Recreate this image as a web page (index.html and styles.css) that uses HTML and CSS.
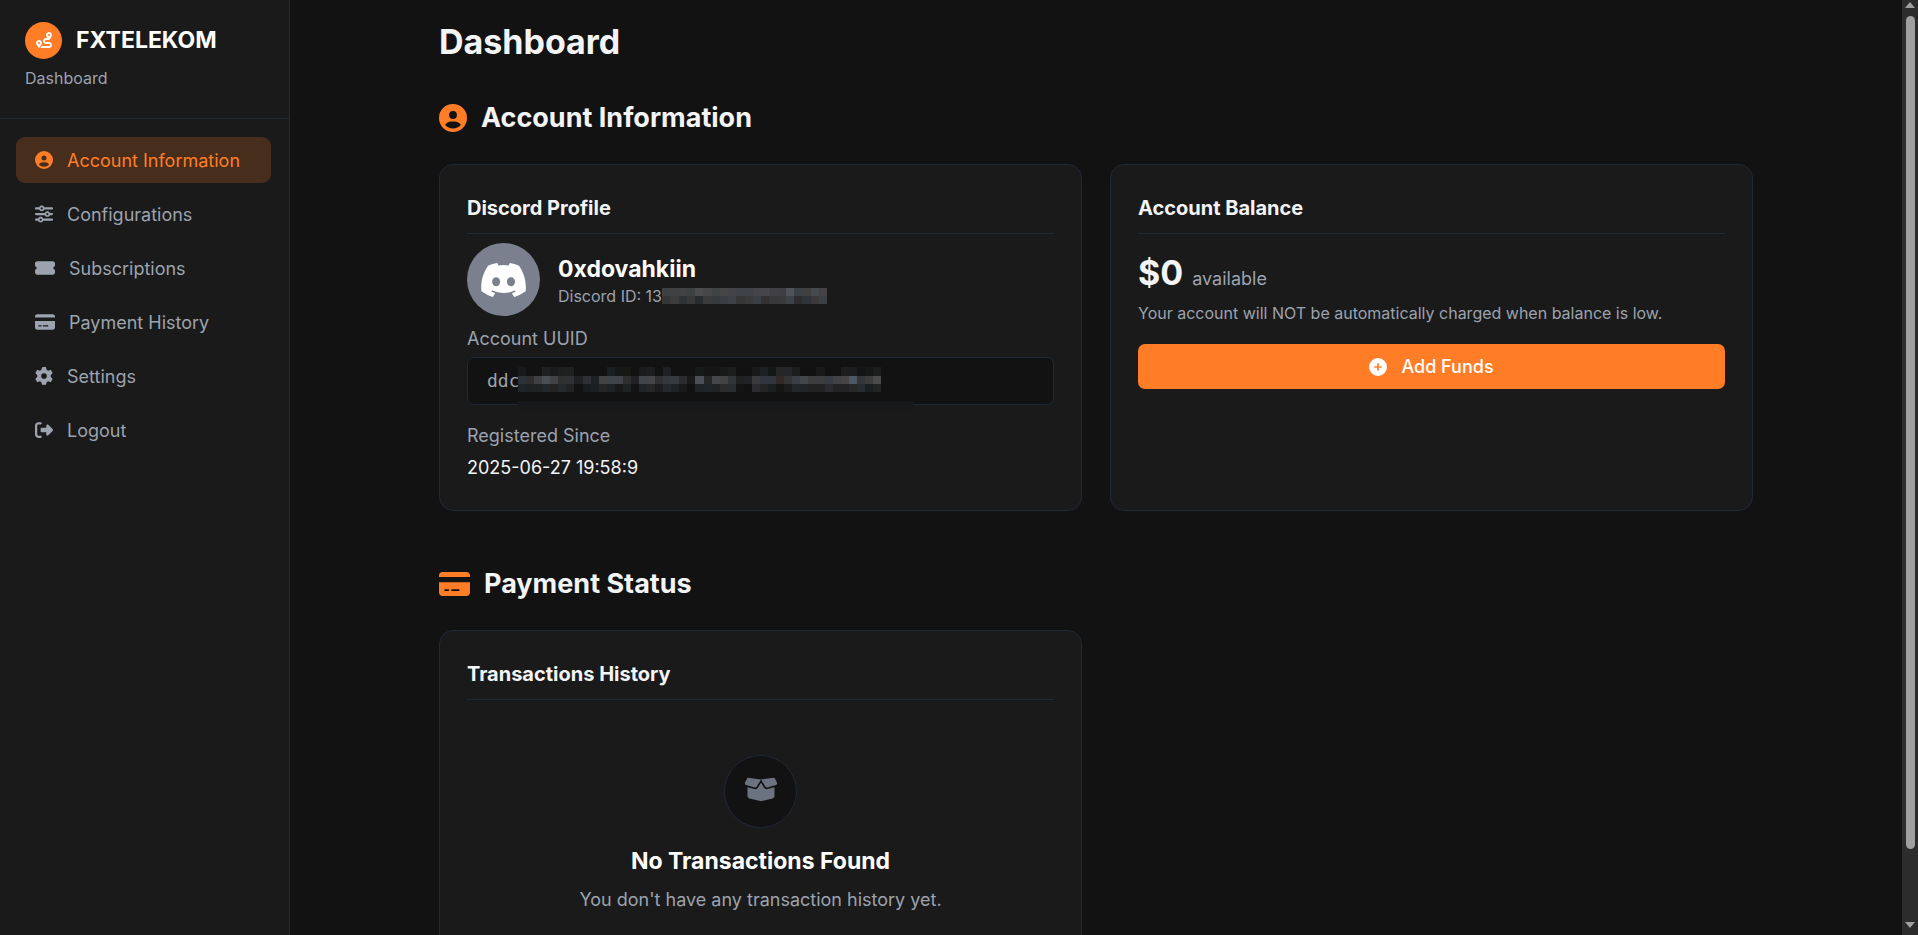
FILE: index.html
```html
<!DOCTYPE html>
<html lang="en">
<head>
<meta charset="utf-8">
<meta name="viewport" content="width=device-width, initial-scale=1">
<title>FXTELEKOM Dashboard</title>
<link rel="stylesheet" href="styles.css">
</head>
<body>
<svg class="sprite" aria-hidden="true">
  <symbol id="i-user" viewBox="0 0 512 512"><path d="M399 384.2C376.9 345.8 335.4 320 288 320H224c-47.4 0-88.9 25.8-111 64.2c35.2 39.2 86.2 63.8 143 63.8s107.8-24.7 143-63.8zM0 256a256 256 0 1 1 512 0A256 256 0 1 1 0 256zm256 16a72 72 0 1 0 0-144 72 72 0 1 0 0 144z"/></symbol>
  <symbol id="i-sliders" viewBox="0 0 512 512"><path d="M0 416c0 17.700 14.300 32 32 32l54.700 0c12.300 28.300 40.500 48 73.300 48s61-19.700 73.300-48L480 448c17.700 0 32-14.300 32-32s-14.300-32-32-32l-246.700 0c-12.300-28.300-40.500-48-73.300-48s-61 19.700-73.300 48L32 384c-17.700 0-32 14.300-32 32zm128 0a32 32 0 1 1 64 0 32 32 0 1 1 -64 0zM320 256a32 32 0 1 1 64 0 32 32 0 1 1 -64 0zm32-80c-32.800 0-61 19.700-73.300 48L32 224c-17.700 0-32 14.300-32 32s14.300 32 32 32l246.700 0c12.300 28.300 40.500 48 73.300 48s61-19.700 73.300-48l54.700 0c17.700 0 32-14.300 32-32s-14.300-32-32-32l-54.700 0c-12.300-28.300-40.500-48-73.300-48zM192 128a32 32 0 1 1 0-64 32 32 0 1 1 0 64zm73.300-64C253 35.700 224.800 16 192 16s-61 19.700-73.300 48L32 64C14.300 64 0 78.300 0 96s14.300 32 32 32l86.700 0c12.300 28.300 40.500 48 73.300 48s61-19.700 73.300-48L480 128c17.700 0 32-14.300 32-32s-14.300-32-32-32L265.300 64z"/></symbol>
  <symbol id="i-ticket" viewBox="0 0 576 512"><path d="M0 128C0 92.700 28.700 64 64 64l448 0c35.300 0 64 28.700 64 64l0 64c0 8.800-7.400 15.700-15.700 18.600C541.500 217.100 528 235 528 256s13.500 38.900 32.300 45.400c8.300 2.900 15.700 9.800 15.700 18.600l0 64c0 35.300-28.700 64-64 64L64 448c-35.300 0-64-28.700-64-64l0-64c0-8.800 7.400-15.700 15.700-18.600C34.500 294.900 48 277 48 256s-13.500-38.900-32.300-45.400C7.400 207.700 0 200.800 0 192l0-64z"/></symbol>
  <symbol id="i-card" viewBox="0 0 576 512"><path d="M64 32C28.700 32 0 60.700 0 96l0 32 576 0 0-32c0-35.300-28.700-64-64-64L64 32zM576 224L0 224 0 416c0 35.300 28.700 64 64 64l448 0c35.300 0 64-28.700 64-64l0-192zM112 352l64 0c8.800 0 16 7.200 16 16s-7.200 16-16 16l-64 0c-8.800 0-16-7.200-16-16s7.200-16 16-16zm112 16c0-8.800 7.200-16 16-16l128 0c8.800 0 16 7.200 16 16s-7.200 16-16 16l-128 0c-8.800 0-16-7.200-16-16z"/></symbol>
  <symbol id="i-gear" viewBox="0 0 512 512"><path d="M495.900 166.600c3.200 8.700 .5 18.400-6.400 24.600l-43.300 39.400c1.100 8.300 1.700 16.800 1.700 25.400s-.6 17.100-1.700 25.400l43.300 39.400c6.900 6.200 9.600 15.900 6.400 24.600c-4.400 11.900-9.700 23.300-15.800 34.300l-4.700 8.100c-6.600 11-14 21.400-22.100 31.200c-5.900 7.200-15.700 9.600-24.500 6.800l-55.700-17.700c-13.400 10.300-28.200 18.900-44 25.400l-12.500 57.100c-2 9.100-9 16.300-18.200 17.800c-13.800 2.300-28 3.500-42.500 3.500s-28.700-1.200-42.500-3.500c-9.200-1.500-16.200-8.700-18.200-17.800l-12.500-57.100c-15.800-6.500-30.600-15.100-44-25.400L83.100 425.900c-8.800 2.800-18.600 .3-24.500-6.800c-8.100-9.800-15.500-20.200-22.100-31.200l-4.700-8.100c-6.100-11-11.400-22.400-15.800-34.300c-3.200-8.700-.5-18.400 6.400-24.600l43.300-39.400C64.600 273.100 64 264.600 64 256s.6-17.100 1.700-25.400L22.400 191.200c-6.900-6.200-9.600-15.900-6.400-24.600c4.400-11.900 9.700-23.300 15.800-34.300l4.700-8.100c6.600-11 14-21.400 22.100-31.200c5.900-7.200 15.700-9.600 24.500-6.800l55.700 17.700c13.400-10.300 28.200-18.900 44-25.400l12.500-57.100c2-9.100 9-16.300 18.200-17.800C227.300 1.200 241.500 0 256 0s28.700 1.200 42.500 3.500c9.200 1.500 16.200 8.700 18.200 17.800l12.500 57.100c15.800 6.500 30.600 15.100 44 25.400l55.700-17.700c8.800-2.800 18.600-.3 24.500 6.800c8.100 9.800 15.500 20.200 22.100 31.200l4.700 8.100c6.100 11 11.400 22.400 15.800 34.300zM256 336a80 80 0 1 0 0-160 80 80 0 1 0 0 160z"/></symbol>
  <symbol id="i-logout" viewBox="0 0 512 512"><path d="M377.900 105.900L500.700 228.700c7.200 7.200 11.300 17.100 11.300 27.300s-4.100 20.100-11.300 27.300L377.900 406.100c-6.400 6.400-15 9.900-24 9.900c-18.700 0-33.900-15.200-33.900-33.900l0-62.100-128 0c-17.700 0-32-14.300-32-32l0-64c0-17.700 14.300-32 32-32l128 0 0-62.100c0-18.700 15.200-33.900 33.900-33.900c9 0 17.600 3.600 24 9.900zM160 96L96 96c-17.700 0-32 14.300-32 32l0 256c0 17.700 14.300 32 32 32l64 0c17.700 0 32 14.300 32 32s-14.300 32-32 32l-64 0c-53 0-96-43-96-96L0 128C0 75 43 32 96 32l64 0c17.700 0 32 14.300 32 32s-14.300 32-32 32z"/></symbol>
  <symbol id="i-plus" viewBox="0 0 512 512"><path d="M256 512A256 256 0 1 0 256 0a256 256 0 1 0 0 512zM232 344V280H168c-13.300 0-24-10.700-24-24s10.700-24 24-24h64V168c0-13.300 10.700-24 24-24s24 10.700 24 24v64h64c13.300 0 24 10.700 24 24s-10.700 24-24 24H280v64c0 13.300-10.700 24-24 24s-24-10.700-24-24z"/></symbol>
  <symbol id="i-box" viewBox="0 0 640 512"><path d="M58.900 42.100c3-6.100 9.600-9.600 16.300-8.700L320 64 564.800 33.400c6.700-.8 13.300 2.700 16.300 8.700l41.700 83.400c9 17.900-.6 39.600-19.800 45.100L439.600 217.300c-13.900 4-28.800-1.900-36.200-14.300L320 64 236.600 203c-7.400 12.400-22.300 18.300-36.200 14.300L37.100 170.600c-19.300-5.500-28.800-27.200-19.800-45.100L58.900 42.100zM321.100 128l54.900 91.400c14.900 24.800 44.600 36.600 72.500 28.600L576 211.600l0 167c0 22-15 41.200-36.400 46.600l-204.100 51c-10.200 2.600-20.900 2.600-31 0l-204.100-51C79 419.700 64 400.500 64 378.500l0-167L191.600 248c27.800 8 57.600-3.800 72.500-28.600L318.900 128l2.200 0z"/></symbol>
  <symbol id="i-route" viewBox="0 0 512 512"><path d="M512 96c0 50.200-59.100 125.100-84.600 155c-3.800 4.400-9.400 6.100-14.500 5L320 256c-17.700 0-32 14.300-32 32s14.300 32 32 32l96 0c53 0 96 43 96 96s-43 96-96 96l-276.400 0c8.700-9.900 19.300-22.600 30-36.800c6.300-8.400 12.800-17.600 19-27.200L416 448c17.700 0 32-14.300 32-32s-14.300-32-32-32l-96 0c-53 0-96-43-96-96s43-96 96-96l39.800 0c-21-31.500-39.800-67.700-39.800-96c0-53 43-96 96-96s96 43 96 96zM117.100 489.100c-3.800 4.300-7.200 8.100-10.100 11.300l-1.800 2-.2-.2c-6 4.600-14.600 4-20-1.800C59.800 473 0 402.500 0 352c0-53 43-96 96-96s96 43 96 96c0 30-21.100 67-43.500 97.900c-10.700 14.700-21.700 28-30.800 38.500l-.6 .7zM128 352a32 32 0 1 0 -64 0 32 32 0 1 0 64 0zM416 128a32 32 0 1 0 0-64 32 32 0 1 0 0 64z"/></symbol>
  <symbol id="i-discord" viewBox="26 32 587 448"><path d="M524.531,69.836a1.500,1.500,0,0,0-.764-.7A485.065,485.065,0,0,0,404.081,32.030a1.816,1.816,0,0,0-1.923.910,337.461,337.461,0,0,0-14.900,30.600,447.848,447.848,0,0,0-134.426,0,309.541,309.541,0,0,0-15.135-30.600,1.890,1.890,0,0,0-1.924-.910A483.689,483.689,0,0,0,116.085,69.137a1.712,1.712,0,0,0-.788.676C39.068,183.651,18.186,294.690,28.430,404.354a2.016,2.016,0,0,0,.765,1.375A487.666,487.666,0,0,0,176.020,479.918a1.900,1.900,0,0,0,2.063-.676A348.200,348.200,0,0,0,208.120,430.400a1.860,1.860,0,0,0-1.019-2.588,321.173,321.173,0,0,1-45.868-21.853,1.885,1.885,0,0,1-.185-3.126c3.082-2.309,6.166-4.711,9.109-7.137a1.819,1.819,0,0,1,1.900-.256c96.229,43.917,200.410,43.917,295.500,0a1.812,1.812,0,0,1,1.924.233c2.944,2.426,6.027,4.851,9.132,7.160a1.884,1.884,0,0,1-.162,3.126,301.407,301.407,0,0,1-45.890,21.830,1.875,1.875,0,0,0-1,2.611,391.055,391.055,0,0,0,30.014,48.815,1.864,1.864,0,0,0,2.063.7A486.048,486.048,0,0,0,610.700,405.729a1.882,1.882,0,0,0,.765-1.352C623.729,277.594,590.933,167.465,524.531,69.836ZM222.491,337.580c-28.972,0-52.844-26.587-52.844-59.239S193.056,219.100,222.491,219.100c29.665,0,53.306,26.820,52.843,59.239C275.334,310.993,251.924,337.580,222.491,337.580Zm195.380,0c-28.971,0-52.843-26.587-52.843-59.239S388.437,219.100,417.871,219.100c29.667,0,53.307,26.820,52.844,59.239C470.715,310.993,447.538,337.580,417.871,337.580Z"/></symbol>
</svg>

<div class="app">
  <aside class="sidebar">
    <header class="brand">
      <div class="brand-row">
        <span class="brand-logo"><svg class="icon-logo"><use href="#i-route"/></svg></span>
        <span class="brand-name">FXTELEKOM</span>
      </div>
      <p class="brand-sub">Dashboard</p>
    </header>
    <nav class="nav">
      <a class="nav-item active" href="#account"><svg class="icon"><use href="#i-user"/></svg>Account Information</a>
      <a class="nav-item" href="#configurations"><svg class="icon"><use href="#i-sliders"/></svg>Configurations</a>
      <a class="nav-item" href="#subscriptions"><svg class="icon icon-wide"><use href="#i-ticket"/></svg>Subscriptions</a>
      <a class="nav-item" href="#payments"><svg class="icon icon-wide"><use href="#i-card"/></svg>Payment History</a>
      <a class="nav-item" href="#settings"><svg class="icon"><use href="#i-gear"/></svg>Settings</a>
      <a class="nav-item" href="#logout"><svg class="icon"><use href="#i-logout"/></svg>Logout</a>
    </nav>
  </aside>

  <main class="main">
    <div class="content">
      <h1 class="page-title">Dashboard</h1>

      <section class="section" id="account">
        <h2 class="section-title"><svg class="icon-lg"><use href="#i-user"/></svg>Account Information</h2>
        <div class="grid">
          <article class="card">
            <h3 class="card-title">Discord Profile</h3>
            <div class="profile">
              <span class="avatar"><svg class="icon-discord"><use href="#i-discord"/></svg></span>
              <div>
                <p class="profile-name">0xdovahkiin</p>
                <p class="profile-id">Discord ID: 13<svg class="mosaic" id="mask-id"></svg></p>
              </div>
            </div>
            <p class="label">Account UUID</p>
            <div class="uuid">ddc<svg class="mosaic-over" id="mask-uuid"></svg></div>
            <p class="label">Registered Since</p>
            <p class="value">2025-06-27 19:58:9</p>
          </article>

          <article class="card">
            <h3 class="card-title">Account Balance</h3>
            <p class="balance"><span class="amount">$0</span><span class="label">available</span></p>
            <p class="note">Your account will NOT be automatically charged when balance is low.</p>
            <button class="btn" type="button"><svg class="icon"><use href="#i-plus"/></svg>Add Funds</button>
          </article>
        </div>
      </section>

      <section class="section" id="payments">
        <h2 class="section-title"><svg class="icon-lg icon-lg-wide"><use href="#i-card"/></svg>Payment Status</h2>
        <div class="grid">
          <article class="card">
            <h3 class="card-title">Transactions History</h3>
            <div class="empty">
              <span class="empty-icon"><svg class="icon-box"><use href="#i-box"/></svg></span>
              <p class="empty-title">No Transactions Found</p>
              <p class="empty-text">You don't have any transaction history yet.</p>
            </div>
          </article>
        </div>
      </section>
    </div>
  </main>

  <div class="scrollbar" aria-hidden="true">
    <span class="arrow arrow-up"></span>
    <span class="thumb"></span>
    <span class="arrow arrow-down"></span>
  </div>
</div>
<script src="mosaic.js"></script>
</body>
</html>
```
FILE: styles.css
```css
:root {
  --bg: #121212;
  --panel: #1a1a1a;
  --line: #1f2937;
  --accent: #ff7d26;
  --text: #f3f4f6;
  --muted: #9ca3af;
}

* { box-sizing: border-box; }

body, h1, h2, h3, p { margin: 0; }

body {
  background: var(--bg);
  color: var(--text);
  font-family: Inter, "Open Sans", sans-serif;
  font-size: 18px;
  line-height: 27px;
}

svg { display: block; flex: none; fill: currentColor; }

.sprite { position: absolute; width: 0; height: 0; }

.app { display: flex; height: 100vh; overflow: hidden; }

/* Sidebar */
.sidebar {
  flex: none;
  width: 290px;
  background: var(--panel);
  border-right: 1px solid var(--line);
}

.brand { padding: 22px 25px 28px; border-bottom: 1px solid var(--line); }
.brand-row { display: flex; align-items: center; gap: 14px; }
.brand-logo {
  display: grid;
  place-items: center;
  width: 37px;
  height: 37px;
  padding-bottom: 2px;
  border-radius: 50%;
  background: var(--accent);
  color: #fff;
}
.icon-logo { width: 16px; height: 16px; }
.brand-name { color: #fff; font-size: 23px; font-weight: 700; }
.brand-sub { margin-top: 8px; color: var(--muted); font-size: 16px; line-height: 23px; }

.nav { display: flex; flex-direction: column; gap: 8px; padding: 18px 18px 18px 16px; }
.nav-item {
  display: flex;
  align-items: center;
  gap: 14px;
  height: 46px;
  padding: 0 19px;
  border-radius: 9px;
  color: var(--muted);
  text-decoration: none;
}
.nav-item.active { background: rgba(255, 125, 38, 0.2); color: var(--accent); }

.icon { width: 18px; height: 18px; }
.icon-wide { width: 20px; }
.icon-lg { width: 28px; height: 28px; color: var(--accent); }
.icon-lg-wide { width: 31px; }

/* Main column */
.main { flex: 1; min-width: 0; overflow: hidden; padding: 21px 27px 0; }
.content { max-width: 1314px; margin: 0 auto; }
.page-title { margin-bottom: 38px; font-size: 34px; line-height: 41px; font-weight: 700; }
.section { margin-bottom: 55px; }
.section-title {
  display: flex;
  align-items: center;
  gap: 14px;
  margin-bottom: 28px;
  font-size: 27px;
  line-height: 36px;
  font-weight: 700;
}
.grid { display: grid; grid-template-columns: 1fr 1fr; gap: 28px; }

.card {
  padding: 27px 27px 29px;
  background: var(--panel);
  border: 1px solid var(--line);
  border-radius: 14px;
}
.card-title {
  padding-bottom: 9px;
  border-bottom: 1px solid var(--line);
  font-size: 20px;
  line-height: 32px;
  font-weight: 700;
}
.label { color: var(--muted); }

/* Profile */
.profile { display: flex; align-items: center; gap: 18px; margin: 9px 0; }
.avatar {
  display: grid;
  place-items: center;
  width: 73px;
  height: 73px;
  border-radius: 50%;
  background: #7a808e;
  color: #fff;
}
.icon-discord { width: 45px; height: 34px; }
.profile-name { color: #fff; font-size: 23px; line-height: 32px; font-weight: 700; }
.profile-id {
  display: flex;
  align-items: center;
  color: var(--muted);
  font-size: 16px;
  line-height: 22px;
}
.mosaic { width: 165px; height: 16px; }
.uuid {
  position: relative;
  height: 48px;
  margin: 5px 0 17px;
  padding: 0 19px;
  background: var(--bg);
  border: 1px solid var(--line);
  border-radius: 7px;
  color: var(--muted);
  font-family: "DejaVu Sans Mono", monospace;
  line-height: 46px;
}
.mosaic-over { position: absolute; left: 50px; top: 9px; width: 396px; height: 43px; }
.value { margin-top: 5px; }

/* Balance */
.balance { display: flex; align-items: baseline; gap: 9px; margin-top: 18px; }
.amount { font-size: 34px; line-height: 41px; font-weight: 700; }
.note { margin: 9px 0 19px; color: var(--muted); font-size: 16px; line-height: 23px; }
.btn {
  display: flex;
  align-items: center;
  justify-content: center;
  gap: 14px;
  width: 100%;
  height: 45px;
  padding: 0;
  border: 0;
  border-radius: 7px;
  background: var(--accent);
  color: #fff;
  font: inherit;
  font-weight: 500;
}

/* Empty state */
.empty {
  display: flex;
  flex-direction: column;
  align-items: center;
  padding: 55px 0;
  text-align: center;
}
.empty-icon {
  display: grid;
  place-items: center;
  width: 73px;
  height: 73px;
  padding-bottom: 4px;
  border: 1px solid var(--line);
  border-radius: 50%;
  background: var(--bg);
  color: #6b7280;
}
.icon-box { width: 34px; height: 27px; }
.empty-title { margin: 17px 0 9px; color: #fff; font-size: 23px; line-height: 32px; font-weight: 700; }
.empty-text { color: var(--muted); }

/* Scrollbar */
.scrollbar {
  display: flex;
  flex: none;
  flex-direction: column;
  align-items: center;
  width: 16px;
  padding: 2px 0 7px;
  background: #2c2c2c;
}
.arrow { border: 5px solid transparent; }
.arrow-up { border-top: 0; border-bottom: 6px solid #9f9f9f; }
.arrow-down { margin-top: auto; border-bottom: 0; border-top: 6px solid #9f9f9f; }
.thumb { width: 9px; height: 90%; margin-top: 8px; border-radius: 5px; background: #9f9f9f; }
```
FILE: mosaic.js
```js
// Paints the censored parts of the account identifiers as grids of flat cells.
const NS = "http://www.w3.org/2000/svg";

function rect(svg, x, y, w, h, fill) {
  const r = document.createElementNS(NS, "rect");
  r.setAttribute("x", x);
  r.setAttribute("y", y);
  r.setAttribute("width", w);
  r.setAttribute("height", h);
  r.setAttribute("style", "fill:#" + fill);
  r.setAttribute("shape-rendering", "crispEdges");
  svg.appendChild(r);
}

function paint(svg, rows, width) {
  let y = 0;
  for (const [height, cells] of rows) {
    const list = cells.split(" ");
    list.forEach((c, i) => {
      const x0 = Math.round(i * width / list.length);
      const x1 = Math.round((i + 1) * width / list.length);
      rect(svg, x0, y, x1 - x0, height, c);
    });
    y += height;
  }
}

paint(document.getElementById("mask-id"), [
  [8, "3f4042 404143 404244 3f4042 4b4b4d 47474a 414244 454545 444446 3f4249 3f4248 454549 46464a 414145 3e3e44 505358 3c4047 404042 474a4c 454345"],
  [8, "363637 3c3c3c 2f3238 393939 2a2b2f 3b3b3b 38393c 3a3d43 3e4248 363636 3a3a3c 3b3f45 323234 38383b 3a3a3c 3d4248 2d2d2d 2f343a 3a3a3b 3c4045"]
], 165);

const uuid = document.getElementById("mask-uuid");
paint(uuid, [
  [9, "181a1b 121212 121212 1f2022 1a1b1c 1e1f20 1f2020 121212 121212 121212 121212 1c1f20 161717 171716 121212 191b1c 1c1f20 121212 1f2022 121212 121212 121212 181a1a 151515 151515 181a19 1c1e1e 111111 111111 191919 1e2021 151716 262626 252628 1c1e1d 111111 111111 191919 111111 121212 1e1e1e 1c1d1f 121416 161717 1c1e1d"],
  [8, "2b3138 2e2e2e 404042 4a4e57 434345 303030 303135 1f2022 2e3034 202124 434343 3f434a 3f4248 2e2e2e 222225 40444b 444446 303033 363840 383a42 2c2c2e 1a1a1a 4a505a 262626 45454d 434343 2e3438 202020 202224 3a3a3e 32343e 30363c 302824 333336 3c3e46 40464c 3c3c3c 3c3c3c 383a44 404248 484444 4d5867 333538 3c3c3c 4a4a4a"],
  [8, "1e2427 202122 202324 25282a 232323 25292b 222222 111111 1a1b1c 1c1f21 262626 1f2326 1a1816 202122 141414 202427 272727 1c1c1e 26282c 1f2327 1a1a1a 111111 1f2228 202628 202224 2c2c2c 2a2d30 141414 111111 2c2c2e 242424 1c1f20 161514 1c1c1c 24262a 222426 222222 222222 2c2c30 232326 232326 282828 262c2f 1c1f20 242424"]
], 363);
rect(uuid, 0, 34, 395, 8, "17181a");
```
